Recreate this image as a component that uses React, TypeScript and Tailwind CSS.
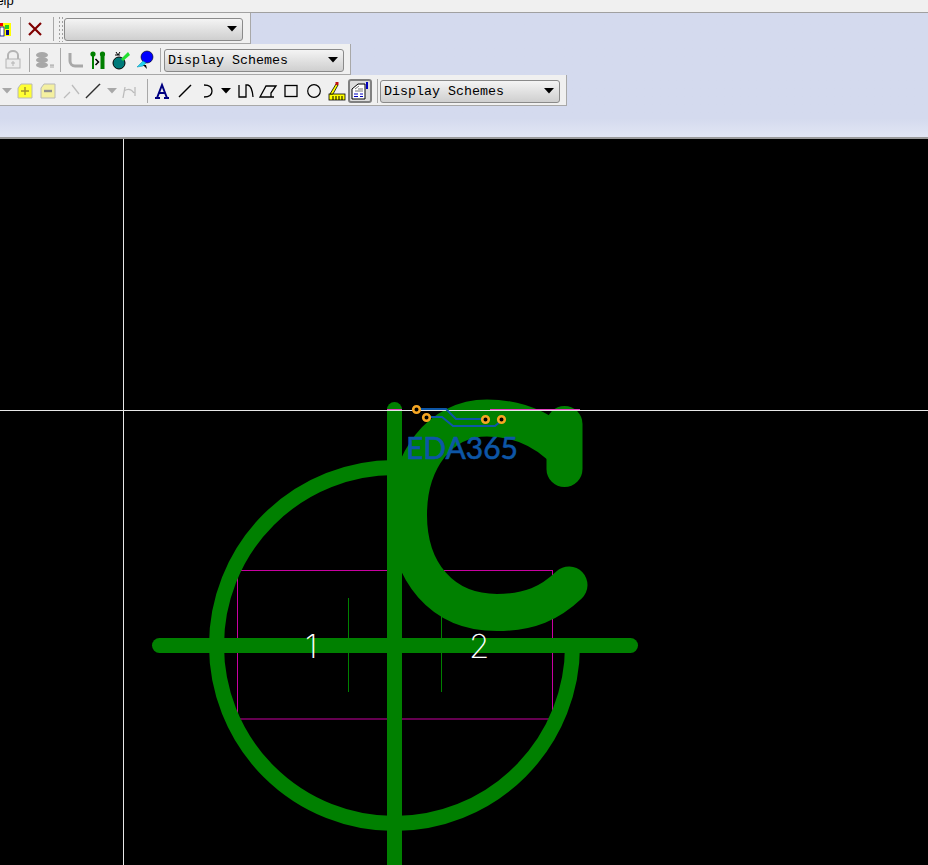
import React from 'react';

const mono = { fontFamily: '"Liberation Mono", monospace' };

function Sep() {
  return <div className="w-px h-6 bg-[#a8a8a8] shrink-0" />;
}

function Arrow({ color = '#000' }: { color?: string }) {
  return (
    <svg width="11" height="6" viewBox="0 0 11 6" className="shrink-0">
      <path d="M0 0H10L5 5.5Z" fill={color} />
    </svg>
  );
}

function Combo({ width, label }: { width: string; label?: string }) {
  return (
    <div
      className={`${width} h-[23px] shrink-0 rounded-[3px] border border-[#8a8a8a] bg-gradient-to-b from-[#f4f4f4] to-[#cfcfcf] flex items-center justify-between pl-[3px] pr-[4px] text-[13.33px] text-black`}
      style={mono}
    >
      <span className="pt-[1px]">{label}</span>
      <Arrow />
    </div>
  );
}

function Icon({ w = 20, children }: { w?: number; children: React.ReactNode }) {
  return (
    <svg width={w} height="20" viewBox={`0 0 ${w} 20`} className="shrink-0">
      {children}
    </svg>
  );
}

export default function App() {
  return (
    <div className="w-[928px] h-[865px] overflow-hidden flex flex-col bg-black">
      {/* cut off menu bar */}
      <div className="h-[13px] shrink-0 bg-[#f0f0f0] border-b border-[#a0a0a0] overflow-hidden relative">
        <span
          className="absolute left-[-13px] top-[-9px] text-[13px] text-black"
          style={{ fontFamily: '"Liberation Sans", sans-serif' }}
        >
          Help
        </span>
      </div>

      <div className="h-[126px] shrink-0 bg-gradient-to-b from-[#d4daee] from-85% to-[#e2e6f4] flex flex-col items-start border-b-2 border-[#9a9a9a]">
        {/* row 1 */}
        <div className="w-[251px] h-[31px] bg-[#f0f0f0] border-r border-b border-[#a8a8a8] flex items-center overflow-hidden pt-[2px]">
          <div className="w-[20px] shrink-0 overflow-hidden flex justify-start">
            <Icon w={12}>
              <rect x="0" y="4" width="11" height="13" fill="#ffff00" />
              <rect x="0" y="4" width="3" height="3" fill="#e00" />
              <rect x="5" y="6" width="4" height="4" fill="#22cc22" />
              <rect x="0" y="8" width="4" height="9" fill="#fff" stroke="#000080" strokeWidth="0.8" />
              <rect x="6" y="11" width="3" height="5" fill="#000080" />
            </Icon>
          </div>
          <Sep />
          <div className="w-[32px] flex justify-start pl-[6px] shrink-0">
            <svg width="16" height="16" viewBox="0 0 16 16">
              <path d="M2 2L14 14M14 2L2 14" stroke="#800000" strokeWidth="2.2" />
            </svg>
          </div>
          <Sep />
          <div
            className="w-[6px] h-[26px] ml-[4px] shrink-0 bg-[radial-gradient(#a0a0a0_1px,transparent_1px)] bg-[length:3px_4px]"
          />
          <Combo width="w-[179px]" />
        </div>

        {/* row 2 */}
        <div className="w-[351px] h-[31px] bg-[#f0f0f0] border-r border-b border-[#a8a8a8] flex items-center pl-[3px] pt-[2px]">
          <Icon w={20}>
            <path d="M5 9V5a5 4 0 0 1 10 0v4" fill="none" stroke="#b4b4b4" strokeWidth="2" />
            <rect x="3" y="9" width="14" height="9" fill="#ececec" stroke="#b4b4b4" />
            <path d="M10 11v5M8 13h4" stroke="#b4b4b4" />
          </Icon>
          <div className="w-[6px] shrink-0" />
          <Sep />
          <div className="w-[3px] shrink-0" />
          <Icon w={23}>
            <ellipse cx="9" cy="5" rx="6" ry="3" fill="#a8a8a8" />
            <ellipse cx="9" cy="10" rx="6" ry="3" fill="#a8a8a8" />
            <ellipse cx="9" cy="15" rx="6" ry="3" fill="#a8a8a8" />
            <path d="M17 15h4M18 15v3M20 15v3" stroke="#a8a8a8" />
          </Icon>
          <div className="w-[4px] shrink-0" />
          <Sep />
          <div className="w-[4px] shrink-0" />
          <Icon w={25}>
            <path d="M5 3v8a5 5 0 0 0 5 5h8" fill="none" stroke="#a8a8a8" strokeWidth="3" />
          </Icon>
          <Icon w={20}>
            <circle cx="3" cy="4" r="2.6" fill="#008000" />
            <rect x="2" y="5" width="2" height="14" fill="#008000" />
            <circle cx="12.5" cy="4" r="2.6" fill="#008000" />
            <rect x="10.5" y="5" width="4" height="14" fill="#008000" />
            <path d="M5.5 9l3 3-3 3" fill="none" stroke="#000" strokeWidth="1.5" />
          </Icon>
          <Icon w={24}>
            <circle cx="9" cy="13" r="6" fill="#007a7a" stroke="#000" />
            <path d="M11 9L18 2l2 3-7 6Z" fill="#22e030" />
            <path d="M6 2l2 3M10 2L8 5M5 5h5" stroke="#000" />
          </Icon>
          <Icon w={22}>
            <circle cx="13" cy="7" r="6" fill="#0000ff" stroke="#000" strokeWidth="0.6" />
            <path d="M9 11L3 17l6-1 3-3Z" fill="#22d4f0" stroke="#0088aa" strokeWidth="0.5" />
            <path d="M9 15l4 4-1-4Z" fill="#000" />
          </Icon>
          <div className="w-[4px] shrink-0" />
          <Sep />
          <div className="w-[3px] shrink-0" />
          <Combo width="w-[180px]" label="Display Schemes" />
        </div>

        {/* row 3 */}
        <div className="w-[567px] h-[31px] bg-[#f0f0f0] border-r border-b border-[#a8a8a8] flex items-center pl-[2px] pt-[2px]">
          <Arrow color="#a8a8a8" />
          <div className="w-[2px] shrink-0" />
          <Icon w={20}>
            <path d="M6 3h11v14H3V7Z" fill="#ffff33" stroke="#b8b8b8" />
            <path d="M10 6v8M6 10h8" stroke="#a09030" strokeWidth="1.4" />
          </Icon>
          <div className="w-[3px] shrink-0" />
          <Icon w={20}>
            <path d="M6 3h11v14H3V7Z" fill="#f4f0a0" stroke="#b8b8b8" />
            <path d="M6 10h8" stroke="#909090" strokeWidth="2.4" />
          </Icon>
          <div className="w-[3px] shrink-0" />
          <Icon w={20}>
            <path d="M3 17L9 11M11 4l7 9" stroke="#bcbcbc" strokeWidth="1.3" fill="none" />
          </Icon>
          <div className="w-[2px] shrink-0" />
          <Icon w={20}>
            <path d="M3 17L17 3" stroke="#303030" strokeWidth="1.6" />
            <path d="M4 17L17 4" stroke="#c0c0c0" strokeWidth="0.5" />
          </Icon>
          <div className="w-[4px] shrink-0" />
          <Arrow color="#a8a8a8" />
          <div className="w-[3px] shrink-0" />
          <Icon w={18}>
            <path d="M2 17L4 6M3 10q6-4 10 2M14 6v9" stroke="#bcbcbc" strokeWidth="1.3" fill="none" />
          </Icon>
          <div className="w-[8px] shrink-0" />
          <Sep />
          <div className="w-[4px] shrink-0" />
          <Icon w={20}>
            <path d="M3 17h5M12 17h5M5 17L10 4l5 13M7 12h6" stroke="#000080" strokeWidth="2" fill="none" />
          </Icon>
          <div className="w-[3px] shrink-0" />
          <Icon w={20}>
            <path d="M4 16L16 4" stroke="#000" strokeWidth="1.5" />
          </Icon>
          <div className="w-[4px] shrink-0" />
          <Icon w={20}>
            <path d="M5 4q8 0 8 6t-8 6" stroke="#000" strokeWidth="1.3" fill="none" />
          </Icon>
          <div className="shrink-0 ml-[2px]">
            <Arrow />
          </div>
          <div className="w-[4px] shrink-0" />
          <Icon w={20}>
            <path d="M3 4V16H10V4H12Q16 5 17 16" stroke="#000" strokeWidth="1.3" fill="none" />
          </Icon>
          <div className="w-[2px] shrink-0" />
          <Icon w={20}>
            <path d="M2 16L8 5H18L13 12V16ZM2 16H16" stroke="#000" strokeWidth="1.3" fill="none" />
          </Icon>
          <div className="w-[3px] shrink-0" />
          <Icon w={20}>
            <rect x="4" y="4.5" width="12" height="11" stroke="#000" strokeWidth="1.3" fill="none" />
          </Icon>
          <div className="w-[3px] shrink-0" />
          <Icon w={20}>
            <circle cx="10" cy="10" r="6.3" stroke="#000" strokeWidth="1.2" fill="none" />
          </Icon>
          <div className="w-[3px] shrink-0" />
          <Icon w={20}>
            <rect x="2" y="13" width="16" height="6" fill="#ffff00" stroke="#000" strokeWidth="0.8" />
            <path d="M6 15v4M9 15v4M12 15v4M15 15v4" stroke="#000" />
            <path d="M3 13L9 3l2 1-5 9Z" fill="#ffff00" stroke="#000" strokeWidth="0.8" />
            <rect x="8.5" y="1" width="3" height="3" fill="#c01010" />
          </Icon>
          <div className="ml-[1px] w-[24px] h-[24px] shrink-0 rounded-[3px] border-2 border-[#808080] bg-[#dcdcdc] flex items-center justify-center">
            <svg width="18" height="18" viewBox="0 0 18 18">
              <path d="M1 7L7 2h7v15H1Z" fill="#fff" stroke="#000" />
              <path d="M4 7l4-3M4 9h8M7 7h5" stroke="#777" />
              <path d="M3 12h4M9 12h3M3 14.5h4M9 14.5h3" stroke="#0000c0" />
              <rect x="15" y="0" width="2" height="7" fill="#0000c0" />
            </svg>
          </div>
          <div className="w-[5px] shrink-0" />
          <Sep />
          <div className="w-[2px] shrink-0" />
          <Combo width="w-[180px]" label="Display Schemes" />
        </div>
      </div>

      {/* board view */}
      <div className="flex-1 bg-black">
        <svg width="928" height="726" viewBox="0 139 928 726" className="block">
          <rect x="237.5" y="570.5" width="315" height="148.5" fill="none" stroke="#c800a0" />
          <path d="M348.5 598V692M441.5 598V692" stroke="#008000" />
          <g fill="none" stroke="#008000" strokeLinecap="round">
            <path d="M572.5 645.5A178 178 0 1 1 394.5 467.5" strokeWidth="15" strokeLinecap="butt" />
            <path d="M159.5 645.5H630.5" strokeWidth="15" />
            <path d="M394.5 409.5V875" strokeWidth="15" />
            <path d="M564.5 469V424" strokeWidth="36" />
            <path
              d="M560 446C540 428 515 418 487 418C440 418 408.5 460 408.5 515C408.5 572 442 612.5 497 612.5C530 612.5 550 603 569 585"
              strokeWidth="37"
            />
          </g>
          <path d="M387 409.5H402M490 409.5H580" stroke="#e040c0" />
          <path d="M0 410.5H928M123.5 139V865" stroke="#e8e8e8" />
          <g fill="none" stroke="#0d56a6" strokeWidth="2">
            <path d="M420 409H446L456 419H482" />
            <path d="M431 417H442L453 426H495L501 421" />
          </g>
          <g fill="#000" stroke="#f5a623" strokeWidth="2.6">
            <circle cx="416.5" cy="409.5" r="3.3" />
            <circle cx="426.5" cy="417.5" r="3.3" />
            <circle cx="485.5" cy="419.5" r="3.3" />
            <circle cx="501.5" cy="419.5" r="3.3" />
          </g>
          <text
            x="406"
            y="459"
            fill="#0d56a6"
            stroke="#0d56a6"
            strokeWidth="0.6"
            fontSize="30"
            textLength="112"
            style={{ fontFamily: 'Lato, sans-serif', fontWeight: 400 }}
          >
            EDA365
          </text>
          <g fill="#fff" fontSize="33" style={{ fontFamily: 'Inter, sans-serif', fontWeight: 200 }}>
            <text x="305" y="658">1</text>
            <text x="469" y="658">2</text>
          </g>
        </svg>
      </div>
    </div>
  );
}
